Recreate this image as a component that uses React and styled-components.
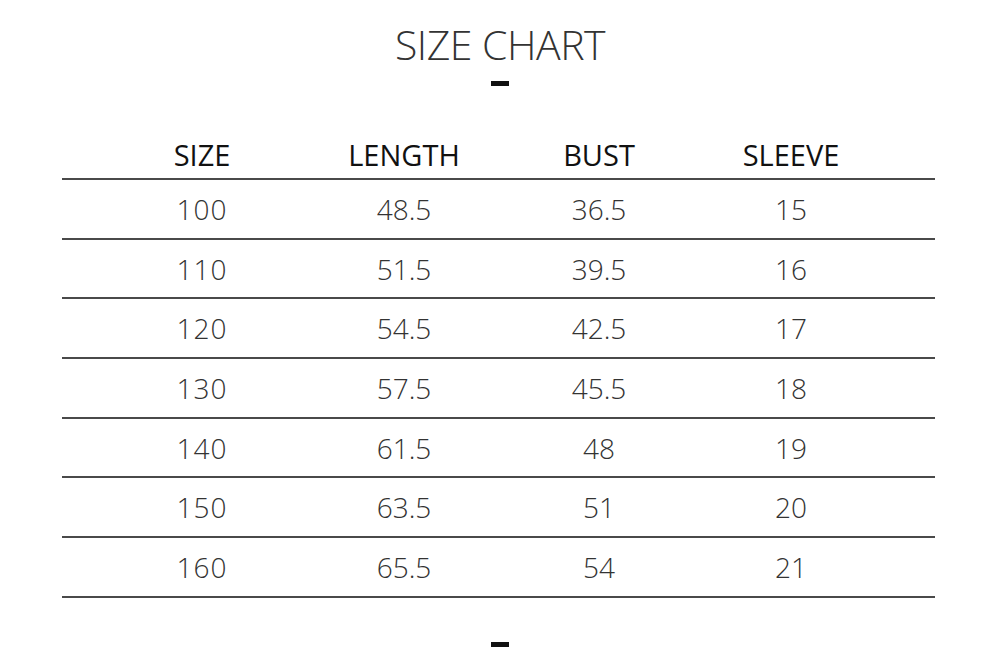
import React from 'react';
import styled, { createGlobalStyle } from 'styled-components';

const GlobalStyle = createGlobalStyle`
  html, body {
    margin: 0;
    padding: 0;
    background: #fff;
  }
  body {
    font-family: 'Open Sans', 'Liberation Sans', sans-serif;
    color: #222;
  }
`

const Page = styled.div`
  width: 1000px;
  height: 665px;
  display: flex;
  flex-direction: column;
  align-items: center;
  overflow: hidden;
`

const Title = styled.h1`
  margin: 17px 0 0;
  font-family: 'Open Sans', sans-serif;
  font-weight: 300;
  font-size: 41px;
  line-height: 54px;
  letter-spacing: -0.5px;
  color: #333;
`

const Dash = styled.div`
  width: 18px;
  height: 5px;
  background: #111;
  margin-top: ${props => props.top}px;
`

const Table = styled.div`
  width: 873px;
  margin-top: 44px;
  margin-left: -3px;
  display: flex;
  flex-direction: column;
`

const Row = styled.div`
  display: grid;
  grid-template-columns: 40px 200px 204px 186px 198px;
  align-items: center;
  height: ${props => (props.head ? 48 : 57.7)}px;
  border-bottom: 2px solid #4a4a4a;
`

const Cell = styled.div`
  text-align: center;
  font-family: 'Open Sans', sans-serif;
  font-size: ${props => (props.head ? 29 : 28)}px;
  font-weight: ${props => (props.head ? 400 : 300)};
  color: ${props => (props.head ? '#111' : '#333')};
  letter-spacing: ${props => (props.size ? '1px' : '0')};
`

const rows = [
  ['100', '48.5', '36.5', '15'],
  ['110', '51.5', '39.5', '16'],
  ['120', '54.5', '42.5', '17'],
  ['130', '57.5', '45.5', '18'],
  ['140', '61.5', '48', '19'],
  ['150', '63.5', '51', '20'],
  ['160', '65.5', '54', '21'],
]

export default function App() {
  return (
    <Page>
      <GlobalStyle />
      <Title>SIZE CHART</Title>
      <Dash top={10} />
      <Table>
        <Row head>
          <span />
          <Cell head>SIZE</Cell>
          <Cell head>LENGTH</Cell>
          <Cell head>BUST</Cell>
          <Cell head>SLEEVE</Cell>
        </Row>
        {rows.map(r => (
          <Row key={r[0]}>
            <span />
            <Cell size>{r[0]}</Cell>
            <Cell>{r[1]}</Cell>
            <Cell>{r[2]}</Cell>
            <Cell>{r[3]}</Cell>
          </Row>
        ))}
      </Table>
      <Dash top={44} />
    </Page>
  )
}
